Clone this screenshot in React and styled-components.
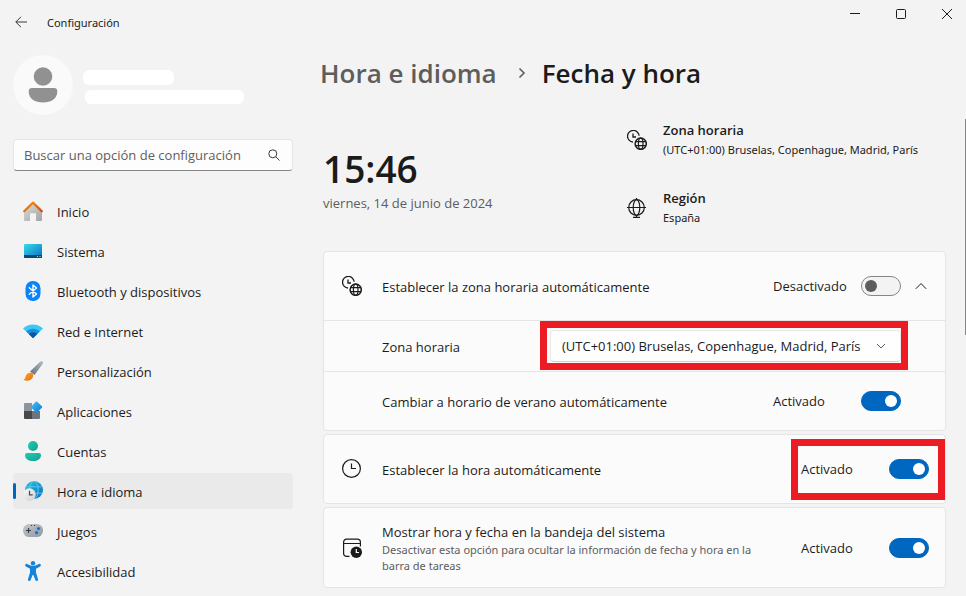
import React, { useState } from 'react';
import styled, { createGlobalStyle, css } from 'styled-components';

const navItems = [
  { id: 'inicio', label: 'Inicio' },
  { id: 'sistema', label: 'Sistema' },
  { id: 'bluetooth', label: 'Bluetooth y dispositivos' },
  { id: 'red', label: 'Red e Internet' },
  { id: 'personalizacion', label: 'Personalización' },
  { id: 'aplicaciones', label: 'Aplicaciones' },
  { id: 'cuentas', label: 'Cuentas' },
  { id: 'hora', label: 'Hora e idioma' },
  { id: 'juegos', label: 'Juegos' },
  { id: 'accesibilidad', label: 'Accesibilidad' },
];

const zones = ['(UTC+01:00) Bruselas, Copenhague, Madrid, París'];

const navIcons = {
  inicio: (
    <>
      <defs>
        <linearGradient id="homeWall" x1="0" y1="0" x2="1" y2="1">
          <stop offset="0" stopColor="#dcdcdc" />
          <stop offset="1" stopColor="#a3a3a3" />
        </linearGradient>
        <linearGradient id="homeRoof" x1="0" y1="0" x2="1" y2="1">
          <stop offset="0" stopColor="#f59a0c" />
          <stop offset="1" stopColor="#d8430f" />
        </linearGradient>
      </defs>
      <path d="M10 2.5 1 11v8a1 1 0 0 0 1 1h5v-7a.8.8 0 0 1 .8-.8h4.4a.8.8 0 0 1 .8.8v7h5a1 1 0 0 0 1-1v-8z" fill="url(#homeWall)" />
      <path d="M1.2 10.2 10 1.600l8.800 8.600" fill="none" stroke="url(#homeRoof)" strokeWidth="2.2" strokeLinecap="round" strokeLinejoin="round" />
    </>
  ),
  sistema: (
    <>
      <defs>
        <linearGradient id="screen" x1="0" y1="0" x2="1" y2="1">
          <stop offset="0" stopColor="#35dcea" />
          <stop offset="1" stopColor="#0b6fc2" />
        </linearGradient>
      </defs>
      <rect x="1" y="3" width="18" height="14" rx="1" fill="url(#screen)" />
      <path d="M1 14h18v2a1 1 0 0 1-1 1H2a1 1 0 0 1-1-1z" fill="#0b4a6e" />
      <path d="M14 15.5h1M16.5 15.5h1" stroke="#9fd8ee" />
    </>
  ),
  bluetooth: (
    <>
      <rect x="2.5" y="0" width="15" height="20" rx="7.2" fill="#0a84f8" />
      <path d="M6.3 6.8l7.2 6.2L10 16V4l3.5 3-7.2 6.2" fill="none" stroke="#fff" strokeWidth="1.4" strokeLinejoin="round" strokeLinecap="round" />
    </>
  ),
  red: (
    <>
      <path d="M0 7.6C5.5 2 14.5 2 20 7.6L10 17z" fill="#3cc8f4" />
      <path d="M3.2 10.6c3.8-3.7 9.8-3.7 13.6 0L10 17z" fill="#1a8fe0" />
      <path d="M5.8 13c2.4-2.3 6-2.3 8.4 0L10 17.2z" fill="#0b57a4" />
    </>
  ),
  personalizacion: (
    <>
      <defs>
        <linearGradient id="handle" x1="1" y1="0" x2="0" y2="1">
          <stop offset="0" stopColor="#b5bcc4" />
          <stop offset="1" stopColor="#646c76" />
        </linearGradient>
        <linearGradient id="bristle" x1="0" y1="0" x2="1" y2="1">
          <stop offset="0" stopColor="#f9a51e" />
          <stop offset="1" stopColor="#ef6c18" />
        </linearGradient>
      </defs>
      <path d="M19.5.6c.7.7.6 1.6.1 2.3L11.5 14 7 10.5 16.8 1c.9-.8 2-.9 2.7-.4z" fill="url(#handle)" />
      <path d="M9.8 12.8c1.3 3.4-1.3 6.9-5.2 6.9-1.6 0-3.2-.3-4.1-1 1.8-.5 1.7-2 2.2-3.6.9-2.9 4.4-4.4 7.1-2.3z" fill="url(#bristle)" />
    </>
  ),
  aplicaciones: (
    <>
      <defs>
        <linearGradient id="diamond" x1="0" y1="0" x2="1" y2="1">
          <stop offset="0" stopColor="#42c6f8" />
          <stop offset="1" stopColor="#0b74d6" />
        </linearGradient>
      </defs>
      <path d="M2 2h7v8H1V3a1 1 0 0 1 1-1z" fill="#8d949b" />
      <path d="M1 10h8v8H2a1 1 0 0 1-1-1z" fill="#45494d" />
      <path d="M9 10h8v7a1 1 0 0 1-1 1H9z" fill="#6d747c" />
      <path d="M12.8.8a1 1 0 0 1 1.4 0l4.7 4.5a1 1 0 0 1 0 1.4l-4.7 4.5a1 1 0 0 1-1.4 0L8.4 6.7a1 1 0 0 1 0-1.4z" fill="url(#diamond)" />
    </>
  ),
  cuentas: (
    <>
      <defs>
        <linearGradient id="person" x1="0" y1="0" x2="1" y2="1">
          <stop offset="0" stopColor="#20cdb4" />
          <stop offset="1" stopColor="#14a08f" />
        </linearGradient>
      </defs>
      <circle cx="10" cy="5" r="5" fill="url(#person)" />
      <path d="M4 12h12a2 2 0 0 1 2 2c0 4-3.5 6-8 6s-8-2-8-6a2 2 0 0 1 2-2z" fill="url(#person)" />
    </>
  ),
  hora: (
    <>
      <defs>
        <linearGradient id="globe" x1="0" y1="0" x2="1" y2="1">
          <stop offset="0" stopColor="#2ec4d8" />
          <stop offset="1" stopColor="#0a6cc4" />
        </linearGradient>
        <linearGradient id="dial" x1="0" y1="0" x2="1" y2="1">
          <stop offset="0" stopColor="#fafafa" />
          <stop offset="1" stopColor="#cfcfcf" />
        </linearGradient>
      </defs>
      <circle cx="11" cy="9" r="9" fill="url(#globe)" />
      <g fill="none" stroke="#5fd4ec" strokeWidth=".8">
        <path d="M3.2 5.8h15.6M2.8 12.2h16.4" />
        <ellipse cx="11" cy="9" rx="4.2" ry="8.8" />
      </g>
      <circle cx="6.4" cy="13.6" r="6.3" fill="url(#dial)" />
      <path d="M6.5 9.8v4h3.2" fill="none" stroke="#4c4c4c" strokeWidth="1.2" />
    </>
  ),
  juegos: (
    <>
      <defs>
        <linearGradient id="pad" x1="0" y1="0" x2="1" y2="1">
          <stop offset="0" stopColor="#c5cad0" />
          <stop offset="1" stopColor="#8f969e" />
        </linearGradient>
      </defs>
      <rect x="0" y="3" width="20" height="13" rx="6.3" fill="url(#pad)" />
      <path d="M3 9.5h5M5.5 7v5" stroke="#3b3f44" strokeWidth="1.2" />
      <circle cx="15.5" cy="7.6" r="1.6" fill="#0b76d6" />
      <circle cx="13.5" cy="11.6" r="1.6" fill="#0b76d6" />
      <path d="M8 4.5h1M11 4.5h1" stroke="#3b3f44" />
    </>
  ),
  accesibilidad: (
    <>
      <circle cx="10" cy="2.2" r="2.2" fill="#1483dc" />
      <path d="M2.3 3.6c.4-.8 1.2-.9 1.9-.5C6 4.2 8 5 10 5s4-.8 5.8-1.9c.7-.4 1.5-.3 1.9.5.4.8 0 1.5-.6 1.9L13 7.8v3.7l2 6.7c.2.8-.1 1.5-.9 1.7-.7.2-1.4-.1-1.7-.8L10.4 14h-.8l-2 5.1c-.3.7-1 1-1.7.8-.8-.2-1.1-.9-.9-1.700l2-6.700V7.800L2.900 5.500c-.6-.4-1-1.100-.6-1.900z" fill="#1483dc" />
    </>
  ),
};

const ClockGlobeIcon = () => (
  <Icon viewBox="0 0 20 20" aria-hidden="true">
    <g fill="none" stroke="#1b1b1b">
      <path d="M6 12A5.8 5.8 0 1 1 12.1 5.8" strokeWidth="1.3" />
      <path d="M6 3.5V7h3" strokeWidth="1.3" />
      <circle cx="13.7" cy="13.7" r="5.6" strokeWidth="1.5" />
      <ellipse cx="13.7" cy="13.7" rx="2.3" ry="5.6" strokeWidth="1.2" />
      <path d="M8.5 11.7h10.4M8.5 15.7h10.4" strokeWidth="1.2" />
    </g>
  </Icon>
);

const RegionIcon = () => (
  <Icon viewBox="0 0 20 20" aria-hidden="true">
    <g fill="none" stroke="#1b1b1b" strokeWidth="1.2">
      <circle cx="9.5" cy="9.5" r="7.8" />
      <ellipse cx="9.5" cy="9.5" rx="3.3" ry="7.8" />
      <path d="M0 9.5h19M9.5 0v2M9.5 17v2.5M6 19.4h7" />
    </g>
  </Icon>
);

const ClockIcon = () => (
  <Icon viewBox="0 0 20 20" aria-hidden="true">
    <g fill="none" stroke="#1b1b1b" strokeWidth="1.2">
      <circle cx="9.5" cy="9.5" r="8.9" />
      <path d="M9.5 4.5v5h4.5" />
    </g>
  </Icon>
);

const TrayIcon = () => (
  <Icon viewBox="0 0 20 20" aria-hidden="true">
    <path d="M7.5 18.4H4.6a3 3 0 0 1-3-3V4.1a3 3 0 0 1 3-3h10.8a3 3 0 0 1 3 3v4.4M1.6 5.5h16.8" fill="none" stroke="#1b1b1b" strokeWidth="1.2" />
    <circle cx="14.3" cy="14.3" r="5.7" fill="#1b1b1b" />
    <path d="M14.3 11v3.5H17" fill="none" stroke="#fff" strokeWidth="1.2" />
  </Icon>
);

const Switch = ({ id, defaultOn, highlighted }) => {
  const [on, setOn] = useState(defaultOn);

  return (
    <SwitchGroup>
      <Status>{on ? 'Activado' : 'Desactivado'}</Status>
      <SwitchInput id={id} type="checkbox" role="switch" checked={on} onChange={() => setOn(!on)} />
      {highlighted && <SwitchHighlight />}
    </SwitchGroup>
  );
};

const Sidebar = () => {
  const [active, setActive] = useState('hora');

  return (
    <Side>
      <Profile>
        <Avatar viewBox="0 0 60 60" aria-hidden="true">
          <circle cx="30" cy="30" r="30" fill="#fafafa" />
          <circle cx="30" cy="21.5" r="9.3" fill="#919191" />
          <path d="M19 33h22a3.3 3.3 0 0 1 3.3 3.3C44.3 44 38 47.5 30 47.5S15.7 44 15.7 36.3A3.3 3.3 0 0 1 19 33z" fill="#919191" />
        </Avatar>
        <Redacted>
          <NameBar />
          <MailBar />
        </Redacted>
      </Profile>
      <SearchBox>
        <SearchInput type="search" placeholder="Buscar una opción de configuración" aria-label="Buscar una opción de configuración" />
        <SearchButton type="button" aria-label="Buscar">
          <SmallIcon viewBox="0 0 12 12">
            <circle cx="4.8" cy="4.8" r="4" />
            <path d="m7.8 7.8 3.7 3.7" />
          </SmallIcon>
        </SearchButton>
      </SearchBox>
      <Nav>
        {navItems.map((item) => (
          <NavLink
            key={item.id}
            href={`#${item.id}`}
            $active={item.id === active}
            aria-current={item.id === active ? 'page' : undefined}
            onClick={() => setActive(item.id)}
          >
            <Icon viewBox="0 0 20 20" aria-hidden="true">{navIcons[item.id]}</Icon>
            <NavText>{item.label}</NavText>
          </NavLink>
        ))}
      </Nav>
    </Side>
  );
};

export default function App() {
  const [open, setOpen] = useState(true);

  return (
    <>
      <GlobalStyle />
      <Page>
        <TitleBar>
          <BackButton type="button" aria-label="Atrás">
            <SmallIcon viewBox="0 0 12 12">
              <path d="M12 6H.8M6 .8.8 6 6 11.2" />
            </SmallIcon>
          </BackButton>
          <AppName>Configuración</AppName>
          <WindowButtons>
            <WindowButton type="button" aria-label="Minimizar">
              <CaptionIcon viewBox="0 0 10 10"><path d="M0 4.5h10" /></CaptionIcon>
            </WindowButton>
            <WindowButton type="button" aria-label="Maximizar">
              <CaptionIcon viewBox="0 0 10 10"><rect x=".5" y=".5" width="9" height="9" rx="1" /></CaptionIcon>
            </WindowButton>
            <WindowButton type="button" aria-label="Cerrar">
              <CaptionIcon viewBox="0 0 10 10"><path d="m0 0 10 10M10 0 0 10" /></CaptionIcon>
            </WindowButton>
          </WindowButtons>
        </TitleBar>

        <Body>
          <Sidebar />
          <Main>
            <Breadcrumb>
              <Crumb href="#hora">Hora e idioma</Crumb>
              <CrumbArrow viewBox="0 0 8 12" aria-hidden="true"><path d="m1.5 1.5 4.5 4.5-4.5 4.5" /></CrumbArrow>
              <Title>Fecha y hora</Title>
            </Breadcrumb>

            <Content>
              <Hero>
                <Now>
                  <Time>15:46</Time>
                  <DateText>viernes, 14 de junio de 2024</DateText>
                </Now>
                <InfoList>
                  <Info>
                    <ClockGlobeIcon />
                    <div>
                      <InfoTitle>Zona horaria</InfoTitle>
                      <InfoText>(UTC+01:00) Bruselas, Copenhague, Madrid, París</InfoText>
                    </div>
                  </Info>
                  <Info>
                    <RegionIcon />
                    <div>
                      <InfoTitle>Región</InfoTitle>
                      <InfoText>España</InfoText>
                    </div>
                  </Info>
                </InfoList>
              </Hero>

              <Cards>
                <Card>
                  <Row>
                    <ClockGlobeIcon />
                    <RowLabel htmlFor="auto-zone">Establecer la zona horaria automáticamente</RowLabel>
                    <Switch id="auto-zone" defaultOn={false} />
                    <ExpandButton type="button" aria-label="Mostrar u ocultar opciones" aria-expanded={open} onClick={() => setOpen(!open)}>
                      <CaptionIcon $size={12} viewBox="0 0 12 12"><path d="m.8 8.8 5.2-5.2 5.2 5.2" /></CaptionIcon>
                    </ExpandButton>
                  </Row>
                  {open && (
                    <>
                      <SubRow $short>
                        <RowLabel htmlFor="zone">Zona horaria</RowLabel>
                        <SelectBox>
                          <ZoneSelect id="zone">
                            {zones.map((zone) => (
                              <option key={zone}>{zone}</option>
                            ))}
                          </ZoneSelect>
                          <SelectArrow viewBox="0 0 12 12" aria-hidden="true"><path d="m2 4 4 4 4-4" /></SelectArrow>
                          <SelectHighlight />
                        </SelectBox>
                      </SubRow>
                      <SubRow>
                        <RowLabel htmlFor="dst">Cambiar a horario de verano automáticamente</RowLabel>
                        <Switch id="dst" defaultOn />
                      </SubRow>
                    </>
                  )}
                </Card>

                <Card>
                  <Row>
                    <ClockIcon />
                    <RowLabel htmlFor="auto-time">Establecer la hora automáticamente</RowLabel>
                    <Switch id="auto-time" defaultOn highlighted />
                  </Row>
                </Card>

                <Card>
                  <Row $tall>
                    <TrayIcon />
                    <RowLabel htmlFor="tray">
                      Mostrar hora y fecha en la bandeja del sistema
                      <Description>
                        Desactivar esta opción para ocultar la información de fecha y hora en la barra de tareas
                      </Description>
                    </RowLabel>
                    <Switch id="tray" defaultOn />
                  </Row>
                </Card>
              </Cards>
            </Content>
          </Main>
        </Body>
        <ScrollThumb />
      </Page>
    </>
  );
}

const GlobalStyle = createGlobalStyle`
  *,
  *::before,
  *::after {
    box-sizing: border-box;
  }

  body {
    margin: 0;
    background: #f3f3f3;
    color: #1b1b1b;
    font-family: 'Open Sans', 'Noto Sans', sans-serif;
    font-size: 13px;
    line-height: 20px;
  }

  button,
  input,
  select {
    margin: 0;
    font: inherit;
    color: inherit;
  }
`;

const Page = styled.div`
  position: relative;
  min-height: 100vh;
`;

const plainButton = css`
  display: flex;
  align-items: center;
  justify-content: center;
  padding: 0;
  border: 0;
  background: transparent;
`;

const smallText = css`
  font-family: 'Noto Sans', 'Open Sans', sans-serif;
  font-size: 11px;
`;

const TitleBar = styled.header`
  display: flex;
  align-items: center;
  height: 44px;
  padding-left: 11px;
`;

const BackButton = styled.button`
  ${plainButton}
  width: 20px;
  height: 28px;
`;

const AppName = styled.span`
  ${smallText}
  padding-top: 2px;
  margin-left: 16px;
`;

const WindowButtons = styled.div`
  display: flex;
  gap: 8px;
  align-self: flex-start;
  margin-left: auto;
`;

const WindowButton = styled.button`
  ${plainButton}
  width: 38px;
  height: 28px;
`;

const Icon = styled.svg`
  flex: none;
  display: block;
  width: 20px;
  height: 20px;
`;

const SmallIcon = styled.svg`
  flex: none;
  width: 12px;
  height: 12px;
  fill: none;
  stroke: #3a3a3a;
`;

const CaptionIcon = styled(SmallIcon)`
  width: ${(props) => props.$size || 10}px;
  height: ${(props) => props.$size || 10}px;
  stroke: #1b1b1b;
`;

const Body = styled.div`
  display: flex;
  gap: 27px;
  padding: 11px 20px 7px 13px;
`;

const Side = styled.aside`
  flex: none;
  width: 280px;
`;

const Profile = styled.div`
  display: flex;
  gap: 10px;
`;

const Avatar = styled.svg`
  width: 60px;
  height: 60px;
`;

const Redacted = styled.div`
  padding-top: 15px;
`;

const NameBar = styled.div`
  width: 91px;
  height: 15px;
  border-radius: 6px;
  background: #fff;
`;

const MailBar = styled.div`
  width: 159px;
  height: 14px;
  margin: 5px 0 0 2px;
  border-radius: 6px;
  background: #fff;
`;

const SearchBox = styled.div`
  display: flex;
  height: 32px;
  margin-top: 24px;
  border: 1px solid #e5e5e5;
  border-bottom-color: #868686;
  border-radius: 4px;
  background: #fdfdfd;
`;

const SearchInput = styled.input`
  flex: 1;
  min-width: 0;
  padding: 0 0 0 10px;
  border: 0;
  outline: 0;
  appearance: none;
  background: transparent;

  &::placeholder {
    color: #606060;
    opacity: 1;
  }
`;

const SearchButton = styled.button`
  ${plainButton}
  width: 36px;
`;

const Nav = styled.nav`
  display: flex;
  flex-direction: column;
  gap: 4px;
  margin-top: 22px;
`;

const NavText = styled.span`
  padding-top: 2px;
`;

const NavLink = styled.a`
  position: relative;
  display: flex;
  align-items: center;
  gap: 14px;
  height: 36px;
  padding: 0 10px;
  border-radius: 4px;
  color: inherit;
  text-decoration: none;
  background: ${(props) => (props.$active ? '#eaeaea' : 'transparent')};

  ${(props) =>
    props.$active &&
    css`
      &::before {
        content: '';
        position: absolute;
        left: 0;
        top: 10px;
        width: 3px;
        height: 16px;
        border-radius: 2px;
        background: #0067c0;
      }
    `}
`;

const Main = styled.main`
  flex: 1;
  min-width: 0;
`;

const Breadcrumb = styled.div`
  display: flex;
  align-items: center;
  font-size: 26px;
  font-weight: 600;
  line-height: 36px;
`;

const Crumb = styled.a`
  color: #5d5d5d;
  text-decoration: none;
`;

const CrumbArrow = styled.svg`
  width: 8px;
  height: 12px;
  margin: 0 16px 0 21px;
  fill: none;
  stroke: #5d5d5d;
  stroke-width: 1.6;
`;

const Title = styled.h1`
  margin: 0;
  font: inherit;
`;

const Content = styled.div`
  padding: 29px 0 0 3px;
`;

const Hero = styled.section`
  display: flex;
  justify-content: space-between;
`;

const Now = styled.div`
  padding-top: 25px;
`;

const Time = styled.div`
  font-size: 37px;
  font-weight: 600;
  line-height: 48px;
`;

const DateText = styled.div`
  color: #5d5d5d;
`;

const InfoList = styled.div`
  display: flex;
  flex-direction: column;
  gap: 28px;
  width: 319px;
`;

const Info = styled.div`
  display: flex;
  align-items: center;
  gap: 16px;
`;

const InfoTitle = styled.div`
  font-weight: 600;
`;

const InfoText = styled.div`
  ${smallText}
`;

const Cards = styled.section`
  display: flex;
  flex-direction: column;
  gap: 3px;
  margin-top: 23px;
`;

const Card = styled.div`
  border: 1px solid #e5e5e5;
  border-radius: 4px;
  background: #fbfbfb;
`;

const Row = styled.div`
  display: flex;
  align-items: center;
  gap: 20px;
  min-height: ${(props) => (props.$tall ? '79px' : '68px')};
  padding: 0 16px 0 18px;
`;

const SubRow = styled(Row)`
  min-height: ${(props) => (props.$short ? '51px' : '59px')};
  padding: 0 44px 0 58px;
  border-top: 1px solid #e5e5e5;
`;

const RowLabel = styled.label`
  flex: 1;
  padding-top: 1px;
`;

const Description = styled.span`
  ${smallText}
  display: block;
  color: #5d5d5d;
  line-height: 16px;
`;

const SwitchGroup = styled.div`
  position: relative;
  display: flex;
  align-items: center;
`;

const Status = styled.span`
  width: 88px;
`;

const SwitchInput = styled.input`
  appearance: none;
  display: flex;
  align-items: center;
  width: 40px;
  height: 20px;
  padding: 0 3px;
  border: 1px solid #868686;
  border-radius: 10px;
  background: #f3f3f3;

  &::before {
    content: '';
    width: 12px;
    height: 12px;
    border-radius: 50%;
    background: #5d5d5d;
  }

  &:checked {
    justify-content: flex-end;
    border-color: #0067c0;
    background: #0067c0;
  }

  &:checked::before {
    background: #fff;
  }
`;

const ExpandButton = styled.button`
  ${plainButton}
  width: 16px;
  height: 28px;
  margin-left: -8px;
`;

const SelectBox = styled.div`
  position: relative;
  width: 351px;
`;

const ZoneSelect = styled.select`
  display: block;
  appearance: none;
  width: 100%;
  height: 32px;
  padding: 0 32px 0 11px;
  border: 1px solid #e8e8e8;
  border-bottom-color: #cfcfcf;
  border-radius: 4px;
  background: #fefefe;
`;

const SelectArrow = styled(SmallIcon)`
  position: absolute;
  right: 14px;
  top: 10px;
  stroke: #5d5d5d;
  pointer-events: none;
`;

/* red marker frames drawn over the controls */
const Highlight = styled.div`
  position: absolute;
  border: 7px solid #ed1c24;
  pointer-events: none;
`;

const SelectHighlight = styled(Highlight)`
  inset: -9px -7px -8px -10px;
`;

const SwitchHighlight = styled(Highlight)`
  inset: -20px -16px -21px -10px;
`;

const ScrollThumb = styled.div`
  position: absolute;
  top: 119px;
  right: 0;
  width: 1px;
  height: 216px;
  background: #868686;
`;
